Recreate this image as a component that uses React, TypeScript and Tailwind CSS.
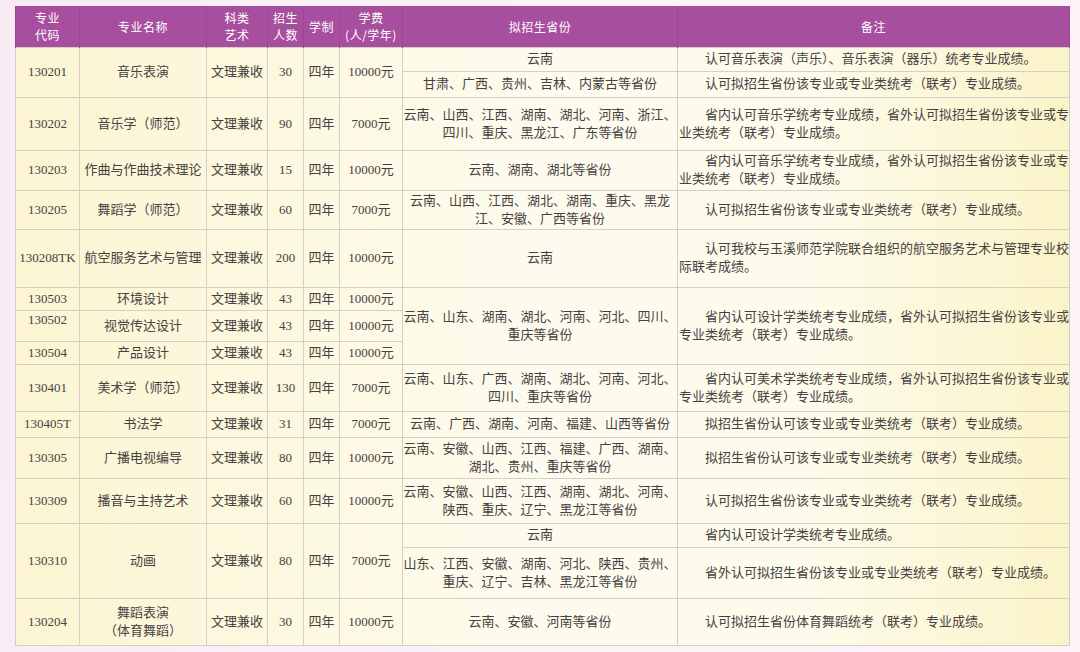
const body = 'border border-[#d5d0c2] p-0 text-center align-middle whitespace-nowrap'
const head = 'border-x border-[#9c4593] p-0 text-center align-middle font-normal whitespace-nowrap'

type Row = {
  code: string
  name: string[]
  count: string
  fee: string
  h: string
  prov: string[]
  remark: string[]
}

function Lines({ lines }: { lines: string[] }) {
  return (
    <>
      {lines.map((l, i) => (
        <div key={i}>{l}</div>
      ))}
    </>
  )
}

function Remark({ lines, rowSpan }: { lines: string[]; rowSpan?: number }) {
  return (
    <td rowSpan={rowSpan} className="border border-[#d5d0c2] p-0 text-left align-middle whitespace-nowrap">
      {lines.map((l, i) => (
        <div key={i} className={i === 0 ? 'pl-[27px]' : 'pl-[1px]'}>
          {l}
        </div>
      ))}
    </td>
  )
}

function Major({ code, name, count, fee, rowSpan, codeTop }: { code: string; name: string[]; count: string; fee: string; rowSpan?: number; codeTop?: boolean }) {
  return (
    <>
      <td rowSpan={rowSpan} className={codeTop ? 'border border-[#d5d0c2] p-0 text-center align-top whitespace-nowrap' : body}>
        {code}
      </td>
      <td rowSpan={rowSpan} className={body}>
        <Lines lines={name} />
      </td>
      <td rowSpan={rowSpan} className={body}>文理兼收</td>
      <td rowSpan={rowSpan} className={body}>{count}</td>
      <td rowSpan={rowSpan} className={body}>四年</td>
      <td rowSpan={rowSpan} className={body}>{fee}</td>
    </>
  )
}

const simple: Row[] = [
  {
    code: '130202',
    name: ['音乐学（师范）'],
    count: '90',
    fee: '7000元',
    h: 'h-[53px]',
    prov: ['云南、山西、江西、湖南、湖北、河南、浙江、', '四川、重庆、黑龙江、广东等省份'],
    remark: ['省内认可音乐学统考专业成绩，省外认可拟招生省份该专业或专', '业类统考（联考）专业成绩。'],
  },
  {
    code: '130203',
    name: ['作曲与作曲技术理论'],
    count: '15',
    fee: '10000元',
    h: 'h-[40px]',
    prov: ['云南、湖南、湖北等省份'],
    remark: ['省内认可音乐学统考专业成绩，省外认可拟招生省份该专业或专', '业类统考（联考）专业成绩。'],
  },
  {
    code: '130205',
    name: ['舞蹈学（师范）'],
    count: '60',
    fee: '7000元',
    h: 'h-[39px]',
    prov: ['云南、山西、江西、湖北、湖南、重庆、黑龙', '江、安徽、广西等省份'],
    remark: ['认可拟招生省份该专业或专业类统考（联考）专业成绩。'],
  },
  {
    code: '130208TK',
    name: ['航空服务艺术与管理'],
    count: '200',
    fee: '10000元',
    h: 'h-[58px]',
    prov: ['云南'],
    remark: ['认可我校与玉溪师范学院联合组织的航空服务艺术与管理专业校', '际联考成绩。'],
  },
]

const after: Row[] = [
  {
    code: '130401',
    name: ['美术学（师范）'],
    count: '130',
    fee: '7000元',
    h: 'h-[47px]',
    prov: ['云南、山东、广西、湖南、湖北、河南、河北、', '四川、重庆等省份'],
    remark: ['省内认可美术学类统考专业成绩，省外认可拟招生省份该专业或', '专业类统考（联考）专业成绩。'],
  },
  {
    code: '130405T',
    name: ['书法学'],
    count: '31',
    fee: '7000元',
    h: 'h-[26px]',
    prov: ['云南、广西、湖南、河南、福建、山西等省份'],
    remark: ['拟招生省份认可该专业或专业类统考（联考）专业成绩。'],
  },
  {
    code: '130305',
    name: ['广播电视编导'],
    count: '80',
    fee: '10000元',
    h: 'h-[41px]',
    prov: ['云南、安徽、山西、江西、福建、广西、湖南、', '湖北、贵州、重庆等省份'],
    remark: ['拟招生省份认可该专业或专业类统考（联考）专业成绩。'],
  },
  {
    code: '130309',
    name: ['播音与主持艺术'],
    count: '60',
    fee: '10000元',
    h: 'h-[45px]',
    prov: ['云南、安徽、山西、江西、湖南、湖北、河南、', '陕西、重庆、辽宁、黑龙江等省份'],
    remark: ['认可拟招生省份该专业或专业类统考（联考）专业成绩。'],
  },
]

function SimpleRow({ r }: { r: Row }) {
  return (
    <tr className={r.h}>
      <Major code={r.code} name={r.name} count={r.count} fee={r.fee} />
      <td className={body}>
        <Lines lines={r.prov} />
      </td>
      <Remark lines={r.remark} />
    </tr>
  )
}

export default function App() {
  return (
    <div className="w-[1080px] h-[652px] overflow-hidden bg-[linear-gradient(100deg,#f7ebf4_0%,#fbf3f8_50%,#fcf4f9_100%)] pt-[6px] pl-[15px]">
      <table
        className="table-fixed border-collapse w-[1054px] text-[13px] leading-[18px] text-[#474141] bg-[linear-gradient(90deg,#fbf5d2_0%,#fcf8e0_25%,#fdfbee_50%,#fdfbeb_75%,#faf3c9_100%)]"
        style={{ fontFamily: '"Liberation Serif", "Noto Sans CJK SC", serif' }}
      >
        <colgroup>
          <col className="w-[64px]" />
          <col className="w-[127px]" />
          <col className="w-[61px]" />
          <col className="w-[36px]" />
          <col className="w-[36px]" />
          <col className="w-[63px]" />
          <col className="w-[275px]" />
          <col className="w-[392px]" />
        </colgroup>
        <thead>
          <tr className="h-[41px] bg-[#a84e9e] text-white text-[12px] leading-[17px] font-['Noto_Sans_CJK_SC',sans-serif] tracking-[0.5px]">
            <th className={head}>专业<br />代码</th>
            <th className={head}>专业名称</th>
            <th className={head}>科类<br />艺术</th>
            <th className={head}>招生<br />人数</th>
            <th className={head}>学制</th>
            <th className={head}>学费<br />(人/学年)</th>
            <th className={head}>拟招生省份</th>
            <th className={head}>备注</th>
          </tr>
        </thead>
        <tbody>
          <tr className="h-[24px]">
            <Major code="130201" name={['音乐表演']} count="30" fee="10000元" rowSpan={2} />
            <td className={body}>云南</td>
            <Remark lines={['认可音乐表演（声乐）、音乐表演（器乐）统考专业成绩。']} />
          </tr>
          <tr className="h-[26px]">
            <td className={body}>甘肃、广西、贵州、吉林、内蒙古等省份</td>
            <Remark lines={['认可拟招生省份该专业或专业类统考（联考）专业成绩。']} />
          </tr>
          {simple.map((r) => (
            <SimpleRow key={r.code} r={r} />
          ))}
          <tr className="h-[23px]">
            <Major code="130503" name={['环境设计']} count="43" fee="10000元" />
            <td rowSpan={3} className={body}>
              <Lines lines={['云南、山东、湖南、湖北、河南、河北、四川、', '重庆等省份']} />
            </td>
            <Remark
              rowSpan={3}
              lines={['省内认可设计学类统考专业成绩，省外认可拟招生省份该专业或', '专业类统考（联考）专业成绩。']}
            />
          </tr>
          <tr className="h-[31px]">
            <Major code="130502" name={['视觉传达设计']} count="43" fee="10000元" codeTop />
          </tr>
          <tr className="h-[23px]">
            <Major code="130504" name={['产品设计']} count="43" fee="10000元" />
          </tr>
          {after.map((r) => (
            <SimpleRow key={r.code} r={r} />
          ))}
          <tr className="h-[24px]">
            <Major code="130310" name={['动画']} count="80" fee="7000元" rowSpan={2} />
            <td className={body}>云南</td>
            <Remark lines={['省内认可设计学类统考专业成绩。']} />
          </tr>
          <tr className="h-[51px]">
            <td className={body}>
              <Lines lines={['山东、江西、安徽、湖南、河北、陕西、贵州、', '重庆、辽宁、吉林、黑龙江等省份']} />
            </td>
            <Remark lines={['省外认可拟招生省份该专业或专业类统考（联考）专业成绩。']} />
          </tr>
          <tr className="h-[47px]">
            <Major code="130204" name={['舞蹈表演', '（体育舞蹈）']} count="30" fee="10000元" />
            <td className={body}>云南、安徽、河南等省份</td>
            <Remark lines={['认可拟招生省份体育舞蹈统考（联考）专业成绩。']} />
          </tr>
        </tbody>
      </table>
    </div>
  )
}
